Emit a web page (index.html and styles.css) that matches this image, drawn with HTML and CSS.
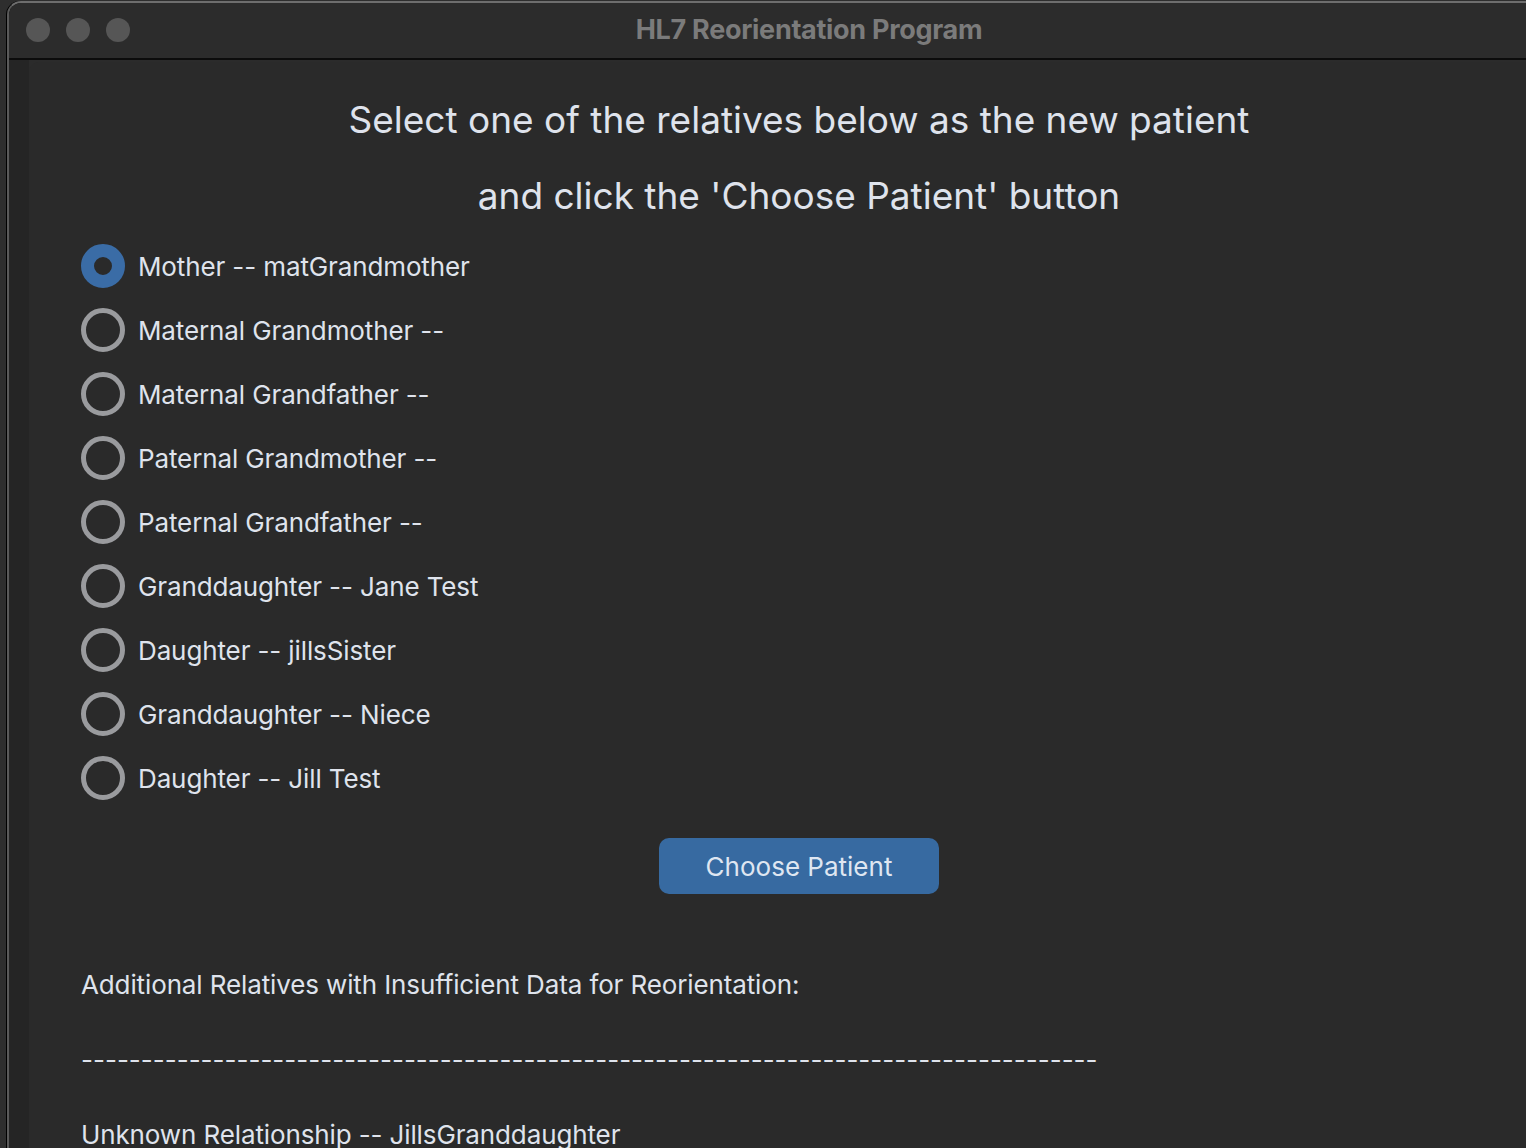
FILE: index.html
```html
<!DOCTYPE html>
<html>
<head>
<meta charset="utf-8">
<title>HL7 Reorientation Program</title>
<link rel="stylesheet" href="styles.css">
</head>
<body>
<div class="desktop">
  <div class="window">
    <div class="titlebar">
      <div class="lights">
        <span class="light"></span>
        <span class="light"></span>
        <span class="light"></span>
      </div>
      <div class="title">HL7 Reorientation Program</div>
    </div>
    <div class="content">
      <div class="gutter"></div>
      <div class="panel">
        <h1 class="heading">
          <span class="heading-line">Select one of the relatives below as the new patient</span>
          <span class="heading-line">and click the 'Choose Patient' button</span>
        </h1>
        <ul class="radios">
          <li class="radio-row"><span class="radio checked"></span><span class="label">Mother -- matGrandmother</span></li>
          <li class="radio-row"><span class="radio"></span><span class="label">Maternal Grandmother --</span></li>
          <li class="radio-row"><span class="radio"></span><span class="label">Maternal Grandfather --</span></li>
          <li class="radio-row"><span class="radio"></span><span class="label">Paternal Grandmother --</span></li>
          <li class="radio-row"><span class="radio"></span><span class="label">Paternal Grandfather --</span></li>
          <li class="radio-row"><span class="radio"></span><span class="label">Granddaughter -- Jane Test</span></li>
          <li class="radio-row"><span class="radio"></span><span class="label">Daughter -- jillsSister</span></li>
          <li class="radio-row"><span class="radio"></span><span class="label">Granddaughter -- Niece</span></li>
          <li class="radio-row"><span class="radio"></span><span class="label">Daughter -- Jill Test</span></li>
        </ul>
        <div class="actions">
          <button class="choose-btn">Choose Patient</button>
        </div>
        <div class="extra">
          <p class="extra-line">Additional Relatives with Insufficient Data for Reorientation:</p>
          <p class="extra-line dashes">-------------------------------------------------------------------------------------</p>
          <p class="extra-line">Unknown Relationship -- JillsGranddaughter</p>
        </div>
      </div>
    </div>
  </div>
</div>
</body>
</html>
```
FILE: styles.css
```css
html, body {
  margin: 0;
  padding: 0;
}
body {
  width: 1526px;
  height: 1148px;
  overflow: hidden;
  background: #2e2e2e;
  font-family: Inter, "Noto Sans", sans-serif;
}
.desktop {
  display: flex;
  width: 1526px;
  height: 1148px;
  overflow: hidden;
  padding-top: 1px;
  box-sizing: border-box;
  background: #2e2e2e;
}
.window {
  margin-left: 7px;
  width: 1600px;
  flex: none;
  border-top: 2px solid #6e6e6e;
  border-left: 2px solid #5a5a5a;
  box-shadow: -1px 0 0 #000, inset 1px 0 0 #000;
  border-top-left-radius: 14px;
  background: #2b2b2b;
  overflow: hidden;
}
.titlebar {
  position: relative;
  height: 57px;
  background: #2c2c2c;
  border-bottom: 2px solid #0c0c0c;
  display: flex;
  align-items: center;
  justify-content: center;
  padding-bottom: 2px;
  box-sizing: border-box;
}
.lights {
  position: absolute;
  left: 17px;
  top: 15px;
  display: flex;
  gap: 16px;
}
.light {
  width: 24px;
  height: 24px;
  border-radius: 50%;
  background: #565656;
}
.title {
  font-family: Inter, "Noto Sans", sans-serif;
  font-weight: 700;
  font-size: 27px;
  color: #7b7b7b;
  letter-spacing: -0.3px;
}
.content {
  display: flex;
  height: 1100px;
}
.gutter {
  width: 20px;
  flex: none;
  background: #252525;
}
.panel {
  width: 1540px;
  flex: none;
  background: #2a2a2a;
  border-top-left-radius: 10px;
  margin-top: 2px;
  padding-top: 20px;
  color: #dfe3ec;
}
.heading {
  margin: 0;
  font-weight: 400;
  font-size: 37px;
  text-align: center;
  display: flex;
  flex-direction: column;
  align-items: center;
}
.heading-line {
  line-height: 76px;
}
.radios {
  list-style: none;
  margin: 0;
  padding: 0 0 0 52px;
}
.radio-row {
  height: 64px;
  display: flex;
  align-items: center;
  gap: 13px;
}
.radio {
  width: 34px;
  height: 34px;
  border: 5px solid #9a9b9e;
  border-radius: 50%;
  box-sizing: content-box;
  flex: none;
}
.radio.checked {
  width: 18px;
  height: 18px;
  border: 13px solid #3a6ca6;
  background: #2a2a2a;
}
.label {
  font-size: 26px;
  letter-spacing: -0.12px;
}
.actions {
  display: flex;
  justify-content: center;
  margin-top: 28px;
}
.choose-btn {
  width: 280px;
  height: 56px;
  border: none;
  border-radius: 10px;
  background: #376aa1;
  color: #dfe6f1;
  font-family: Inter, "Noto Sans", sans-serif;
  font-size: 26px;
  padding: 0;
}
.extra {
  margin-top: 53px;
  padding-left: 52px;
}
.extra-line {
  margin: 0;
  font-size: 26px;
  line-height: 75px;
  white-space: nowrap;
  letter-spacing: -0.12px;
}
.extra-line.dashes {
  letter-spacing: 0;
}
```
